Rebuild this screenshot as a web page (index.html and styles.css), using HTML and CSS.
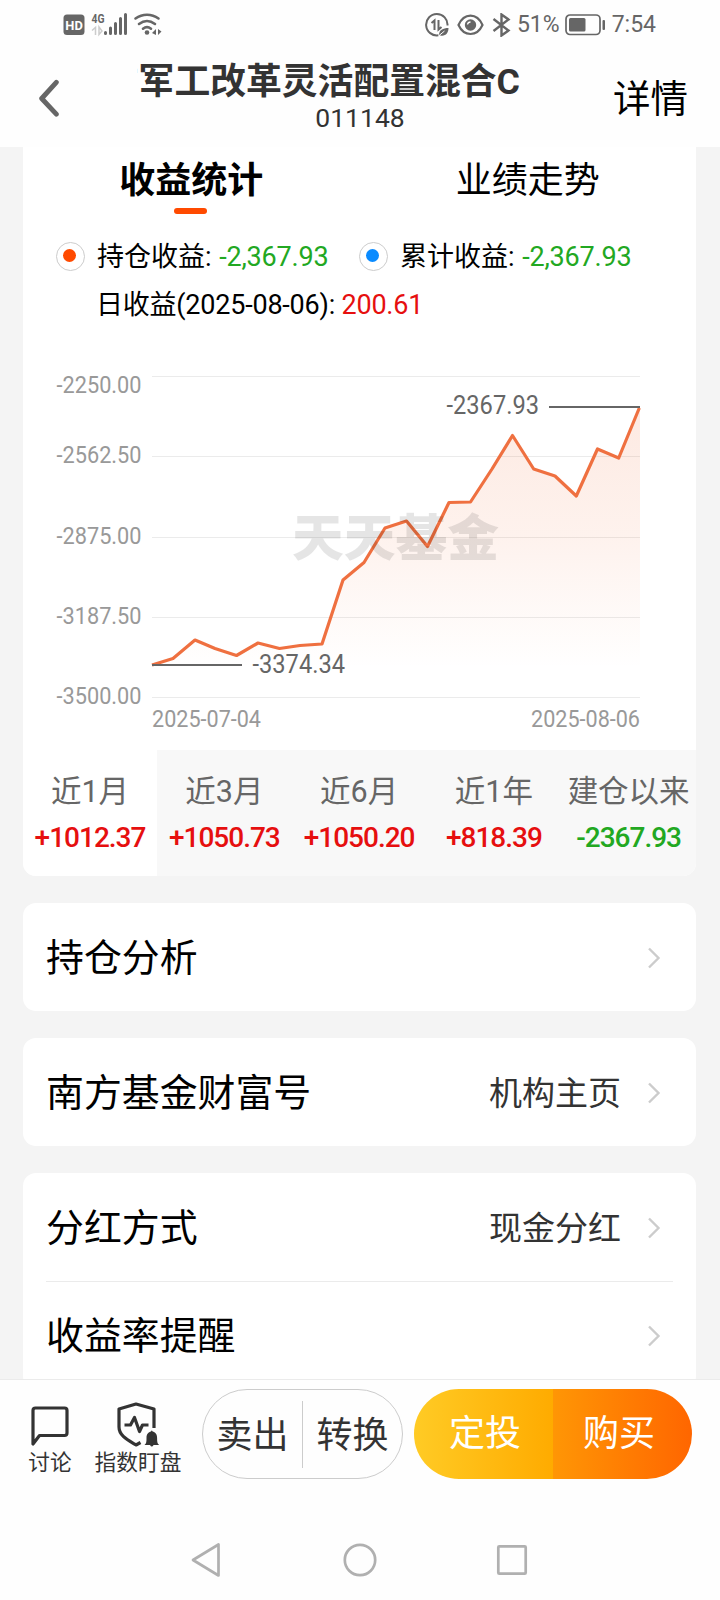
FILE: index.html
```
<!DOCTYPE html>
<html lang="zh-CN">
<head>
<meta charset="utf-8">
<title>收益统计</title>
<link rel="stylesheet" href="styles.css">
</head>
<body>

<div class="status">
  <svg class="st-left" width="104" height="28" viewBox="62 10 104 28">
    <rect x="63.500" y="14.500" width="21" height="20.500" rx="3.500" fill="#666"/>
    <text x="65.300" y="29.500" font-size="12.500" font-weight="700" fill="#fff" textLength="17.500" lengthAdjust="spacingAndGlyphs">HD</text>
    <text x="91.500" y="23" font-size="13.500" font-weight="700" fill="#666" textLength="13" lengthAdjust="spacingAndGlyphs">4G</text>
    <path d="M92 30.500l3.500-3v7.500M99 27v7.500l3-3.500z" fill="none" stroke="#ccc" stroke-width="1.500"/>
    <path d="M105.500 32.500v1M110.500 28v5.500M115.500 23.500v10M120.500 18.500v15M125.500 14.500v19" stroke="#666" stroke-width="3" stroke-linecap="round"/>
    <g fill="none" stroke="#666" stroke-width="2.600" stroke-linecap="round">
      <path d="M135.500 18.500c7-5 16-5 23 0M139 24c5-3.800 11-3.800 16 0M143 28.700c2.500-2 5.500-2 8 0"/>
    </g>
    <circle cx="147" cy="32.500" r="2.300" fill="#666"/>
    <path d="M152 33l4-4v6zM158 29v6l3.500-3.500z" fill="#666"/>
  </svg>
  <div class="st-right">
    <svg width="24" height="24" viewBox="0 0 24 24">
      <path d="M22.500 12.500a10.700 10.700 0 1 0-9 9.800" fill="none" stroke="#666" stroke-width="2"/>
      <path d="M6.500 10l3-2.500v9.500M13.500 7v9.500l3-2.500" fill="none" stroke="#666" stroke-width="2"/>
      <path d="M14 22c0-5 4-7 9.500-7 0 5-3 8.500-8 7.500" fill="#666"/>
      <path d="M13.500 23l6-5" stroke="#fff" stroke-width="1"/>
    </svg>
    <svg class="st-eye" width="27" height="22" viewBox="0 0 27 22">
      <path d="M1.500 11C7-1.500 20-1.500 25.500 11C20 23 7 23 1.500 11z" fill="none" stroke="#666" stroke-width="2.200"/>
      <circle cx="13.500" cy="11" r="5.700" fill="#666"/>
      <path d="M10.500 10.500c.3-1.700 1.300-2.500 3-2.500" fill="none" stroke="#fff" stroke-width="1.300"/>
    </svg>
    <svg class="st-bt" width="19" height="24" viewBox="0 0 19 24">
      <path d="M1.500 6l15 11.500-7 5V1.500l7 5L1.500 18" fill="none" stroke="#666" stroke-width="2.400"/>
    </svg>
    <span>51%</span>
    <svg class="st-bat" width="41" height="22" viewBox="0 0 41 22">
      <rect x="1" y="1" width="34" height="19.500" rx="4" fill="none" stroke="#666" stroke-width="1.700"/>
      <rect x="4" y="4" width="16.500" height="13.500" rx="1.500" fill="#666"/>
      <rect x="37.500" y="6" width="2.500" height="10" rx="1" fill="#666"/>
    </svg>
    <span>7:54</span>
  </div>
</div>

<div class="header">
  <svg class="back" width="24" height="40" viewBox="0 0 24 40">
    <path d="M19.500 3.500L4.500 20L19.500 36" fill="none" stroke="#666" stroke-width="5" stroke-linecap="round" stroke-linejoin="round"/>
  </svg>
  <div class="title">
    <div class="name"><span>南方军工改革灵活配置混合C</span></div>
    <div class="code">011148</div>
  </div>
  <div class="detail">详情</div>
</div>

<div class="main">
  <div class="card first">
    <div class="tabs">
      <div class="tab on">收益统计</div>
      <div class="tab">业绩走势</div>
    </div>
    <div class="legend">
      <i class="radio red"></i>
      <div class="item">持仓收益: <span class="down">-2,367.93</span></div>
      <i class="radio blue"></i>
      <div class="item">累计收益: <span class="down">-2,367.93</span></div>
    </div>
    <div class="day">日收益(2025-08-06): <span class="up">200.61</span></div>

    <svg class="chart" width="673" height="410" viewBox="23 340 673 410">
      <defs>
        <linearGradient id="fill" x1="0" y1="407" x2="0" y2="697" gradientUnits="userSpaceOnUse">
          <stop offset="0" stop-color="#f2703c" stop-opacity=".15"/>
          <stop offset=".45" stop-color="#f2703c" stop-opacity=".09"/>
          <stop offset=".9" stop-color="#f2703c" stop-opacity="0"/>
        </linearGradient>
      </defs>
      <path d="M152 376.500H640M152 456.500H640M152 537.500H640M152 617.500H640M152 697.500H640" stroke="#ebebeb"/>
      <path d="M152 665L173 658.500L195 640L215 648.500L236.500 655.500L258 643L279.500 648.500L300 645.500L322 644L343 580L364 562.500L385 528L406.500 521L427.500 546.500L449 502.500L470.500 502L492 469L512.500 435.500L533.700 469L555 476L576.300 496L597.500 449L618.700 458L640 407V697H152z" fill="url(#fill)"/>
      <path d="M152 665L173 658.500L195 640L215 648.500L236.500 655.500L258 643L279.500 648.500L300 645.500L322 644L343 580L364 562.500L385 528L406.500 521L427.500 546.500L449 502.500L470.500 502L492 469L512.500 435.500L533.700 469L555 476L576.300 496L597.500 449L618.700 458L639.300 408" fill="none" stroke="#ef7040" stroke-width="3.200" stroke-linejoin="round"/>
      <path d="M152 665H242M549 407H640" stroke="#666" stroke-width="2"/>
      <text class="mark" x="292" y="556" textLength="207" lengthAdjust="spacingAndGlyphs">天天基金</text>
      <g class="axis">
        <text x="56.500" y="393" textLength="85" lengthAdjust="spacingAndGlyphs">-2250.00</text>
        <text x="56.500" y="463" textLength="85" lengthAdjust="spacingAndGlyphs">-2562.50</text>
        <text x="56.500" y="544" textLength="85" lengthAdjust="spacingAndGlyphs">-2875.00</text>
        <text x="56.500" y="624" textLength="85" lengthAdjust="spacingAndGlyphs">-3187.50</text>
        <text x="56.500" y="704" textLength="85" lengthAdjust="spacingAndGlyphs">-3500.00</text>
        <text x="152" y="727" textLength="109" lengthAdjust="spacingAndGlyphs">2025-07-04</text>
        <text x="531" y="727" textLength="109" lengthAdjust="spacingAndGlyphs">2025-08-06</text>
      </g>
      <g class="val">
        <text x="252.500" y="673" textLength="92.500" lengthAdjust="spacingAndGlyphs">-3374.34</text>
        <text x="446.500" y="414" textLength="92.500" lengthAdjust="spacingAndGlyphs">-2367.93</text>
      </g>
    </svg>

    <div class="periods">
      <div class="period on"><p>近1月</p><b class="up">+1012.37</b></div>
      <div class="period"><p>近3月</p><b class="up">+1050.73</b></div>
      <div class="period"><p>近6月</p><b class="up">+1050.20</b></div>
      <div class="period"><p>近1年</p><b class="up">+818.39</b></div>
      <div class="period"><p>建仓以来</p><b class="down">-2367.93</b></div>
    </div>
  </div>

  <div class="card">
    <div class="row">持仓分析
      <svg class="arrow" width="14" height="22" viewBox="0 0 14 22"><path d="M2 1.500L11.500 11L2 20.500"/></svg>
    </div>
  </div>

  <div class="card">
    <div class="row">南方基金财富号 <span class="more">机构主页</span>
      <svg class="arrow" width="14" height="22" viewBox="0 0 14 22"><path d="M2 1.500L11.500 11L2 20.500"/></svg>
    </div>
  </div>

  <div class="card">
    <div class="row">分红方式 <span class="more">现金分红</span>
      <svg class="arrow" width="14" height="22" viewBox="0 0 14 22"><path d="M2 1.500L11.500 11L2 20.500"/></svg>
    </div>
    <div class="row line">收益率提醒
      <svg class="arrow" width="14" height="22" viewBox="0 0 14 22"><path d="M2 1.500L11.500 11L2 20.500"/></svg>
    </div>
  </div>
</div>

<div class="bar">
  <div class="tool talk">
    <svg width="40" height="46" viewBox="0 0 40 46">
      <path d="M3 43V9.500q0-2.500 2.500-2.500H34.500q2.500 0 2.500 2.500V32q0 2.500-2.500 2.500H9.500z" fill="none" stroke="#333" stroke-width="3.200" stroke-linejoin="round"/>
    </svg>
    讨论
  </div>
  <div class="tool watch">
    <svg width="46" height="46" viewBox="0 0 46 46">
      <g fill="none" stroke="#333" stroke-width="3.200" stroke-linejoin="round">
        <path d="M39 27V8L21 3L4 8V26c0 8.500 8 12.500 17 18l4.500-2.500"/>
        <path d="M9.500 24h6l4-7.500l5 14l3-6.500h6"/>
      </g>
      <path d="M29.500 44c2-1.500 2-3.500 2-7c0-4 2-6 4.500-6.500q.8-2 1.600 0c2.500.5 4.500 2.500 4.500 6.500c0 3.500 0 5.500 2 7h-5.500q-1.800 3-3.600 0z" fill="#333"/>
    </svg>
    指数盯盘
  </div>
  <div class="pill sell"><span>卖出</span><i></i><span>转换</span></div>
  <div class="pill buy"><span class="fixed">定投</span><span class="now">购买</span></div>
</div>

<div class="nav">
  <svg width="360" height="40" viewBox="180 1540 360 40">
    <g fill="none" stroke="#b0b0b0" stroke-width="2.700" stroke-linejoin="round">
      <path d="M218.500 1544.500V1575.500L193 1560z"/>
      <circle cx="360" cy="1560" r="15.200"/>
      <rect x="498.300" y="1546.300" width="27.400" height="27.400" rx="1"/>
    </g>
  </svg>
</div>

</body>
</html>
```
FILE: styles.css
```
* { box-sizing: border-box; margin: 0; padding: 0; }
body { width: 720px; height: 1600px; overflow: hidden; background: #fefefe;
       display: flex; flex-direction: column; color: #000;
       font-family: Roboto, "Noto Sans CJK SC", sans-serif; }
svg { display: block; flex: none; }
.up { color: #e60f0f; }
.down { color: #22a822; }

/* status bar */
.status { height: 48px; padding: 0 64px 0 62px; display: flex;
          justify-content: space-between; align-items: center; }
.st-right { display: flex; align-items: center; color: #666; font-size: 23px; padding-top: 1px; }
.st-eye { margin-left: 8px; }
.st-bt { margin: 0 6px 0 8px; }
.st-bat { margin: 0 6px 0 5px; }

/* header */
.header { height: 99px; display: flex; align-items: center; }
.back { margin-left: 37px; padding-top: 1px; }
.title { width: 383px; margin-left: 76px; height: 99px; padding-top: 10px; color: #333; }
.name { display: flex; justify-content: flex-end; overflow: hidden; white-space: nowrap;
        font-size: 35.8px; font-weight: 700; line-height: 48px; }
.code { padding-left: 63px; text-align: center; font-size: 26.5px; line-height: 24px; }
.detail { margin-left: 93px; padding-top: 3px; font-size: 37.5px; line-height: 44px; white-space: nowrap; }

/* content */
.main { height: 1232px; flex: none; overflow: hidden; background: #f4f4f4; padding: 0 24px 0 23px; }
.card { background: #fff; border-radius: 13px; margin-bottom: 27px; overflow: hidden; }
.first { height: 729px; border-radius: 0 0 13px 13px; }
.tabs { display: flex; height: 70px; }
.tab { flex: 1; font-size: 36px; line-height: 68px; text-align: center; }
.on.tab { font-weight: 700; }
.tab.on:after { content: ""; display: block; width: 33px; height: 6px; border-radius: 3px;
                background: #ff4a00; margin: -7px auto 0; position: relative; left: -1px; }
.legend { display: flex; align-items: center; height: 78px; padding-left: 33px; }
.radio { width: 29px; height: 29px; border: 1px solid #ccc; border-radius: 50%; flex: none;
         display: flex; align-items: center; justify-content: center; }
.radio:after { content: ""; width: 13px; height: 13px; border-radius: 50%; margin: -1px 2px 0 0; }
.red:after { background: #ff4a00; }
.blue:after { background: #0a8bff; }
.item { width: 274px; padding: 2px 0 0 12px; font-size: 27px; line-height: 36px; white-space: nowrap; }
.item span { letter-spacing: -.2px; margin-left: 1px; }
.day { height: 45px; padding-left: 73px; font-size: 27px; line-height: 21px; white-space: nowrap;
       letter-spacing: -.22px; }
.axis { font-size: 23px; fill: #999; }
.val { font-size: 25px; fill: #666; }
.mark { font-size: 50px; font-weight: 900; fill: #000; fill-opacity: .1; }
.periods { display: grid; grid-template-columns: 134px repeat(4, 1fr); height: 126px; background: #f8f8f8; }
.period { text-align: center; padding-top: 20px; white-space: nowrap; }
.period.on { background: #fff; }
.period p { font-size: 30.5px; line-height: 44px; color: #666; }
.period b { display: block; font-size: 28px; font-weight: 500; line-height: 48px; letter-spacing: -1px; }

.row { display: flex; align-items: center; height: 108px; padding: 0 35px 6px 23px; font-size: 37.9px; }
.row .more { margin-left: auto; font-size: 33px; color: #333; margin-right: 26px; padding-top: 4px; }
.row .arrow { margin: 8px 0 0 auto; fill: none; stroke: #ccc; stroke-width: 2.4; }
.row .more + .arrow { margin-left: 0; }
.line { background: linear-gradient(#ebebeb, #ebebeb) 23px 0 / 627px 1px no-repeat; }

/* bottom bar */
.bar { height: 121px; flex: none; display: flex; border-top: 1px solid #ebebeb; padding-top: 9px; }
.tool { display: flex; flex-direction: column; align-items: center; padding-top: 12px;
        font-size: 21.7px; line-height: 32px; color: #333; white-space: nowrap; }
.talk { width: 44px; margin-left: 28px; }
.watch { width: 88px; margin-left: 22px; }
.pill { height: 90px; border-radius: 45px; display: flex; align-items: center; font-size: 36px; flex: none; }
.sell { width: 201px; margin-left: 20px; border: 1px solid #ccc; color: #333; }
.sell span { flex: 1; text-align: center; padding-bottom: 4px; }
.sell i { width: 1px; height: 67px; background: #ccc; }
.buy { width: 278px; margin-left: 11px; overflow: hidden; color: #fff; line-height: 91px; text-align: center; }
.fixed { width: 139px; padding-left: 3px; background: linear-gradient(90deg, #ffcb25, #ffab00); }
.now { width: 139px; padding-right: 7px; background: linear-gradient(90deg, #ff9605, #ff6600); }

.nav { flex: 1; display: flex; justify-content: center; padding-top: 40px; }
```
